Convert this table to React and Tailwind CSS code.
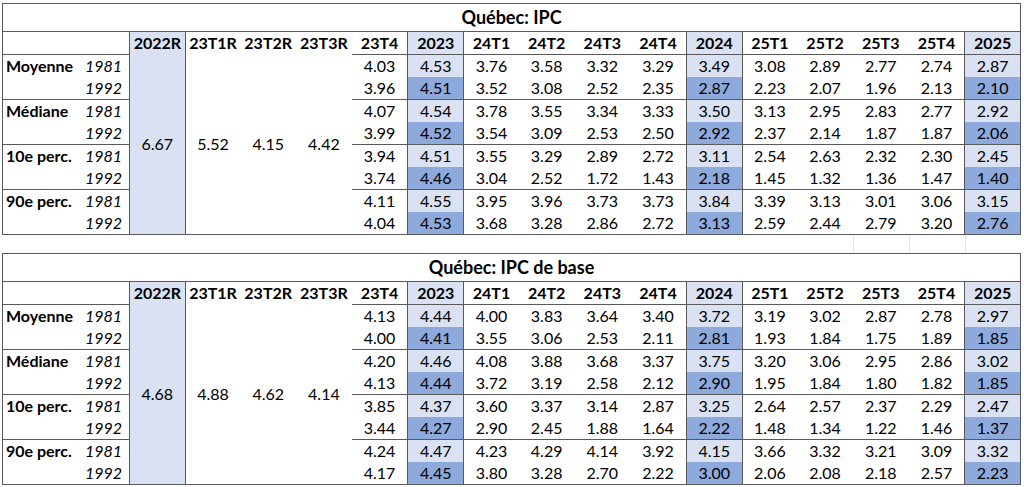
import React from "react";

const HEAD = ["2022R","23T1R","23T2R","23T3R","23T4","2023","24T1","24T2","24T3","24T4","2024","25T1","25T2","25T3","25T4","2025"];

const T1 = {
  title: "Québec: IPC",
  merged: ["6.67","5.52","4.15","4.42"],
  rows: [
    ["Moyenne","1981",["4.03","4.53","3.76","3.58","3.32","3.29","3.49","3.08","2.89","2.77","2.74","2.87"]],
    [null,"1992",["3.96","4.51","3.52","3.08","2.52","2.35","2.87","2.23","2.07","1.96","2.13","2.10"]],
    ["Médiane","1981",["4.07","4.54","3.78","3.55","3.34","3.33","3.50","3.13","2.95","2.83","2.77","2.92"]],
    [null,"1992",["3.99","4.52","3.54","3.09","2.53","2.50","2.92","2.37","2.14","1.87","1.87","2.06"]],
    ["10e perc.","1981",["3.94","4.51","3.55","3.29","2.89","2.72","3.11","2.54","2.63","2.32","2.30","2.45"]],
    [null,"1992",["3.74","4.46","3.04","2.52","1.72","1.43","2.18","1.45","1.32","1.36","1.47","1.40"]],
    ["90e perc.","1981",["4.11","4.55","3.95","3.96","3.73","3.73","3.84","3.39","3.13","3.01","3.06","3.15"]],
    [null,"1992",["4.04","4.53","3.68","3.28","2.86","2.72","3.13","2.59","2.44","2.79","3.20","2.76"]],
  ],
};

const T2 = {
  title: "Québec: IPC de base",
  merged: ["4.68","4.88","4.62","4.14"],
  rows: [
    ["Moyenne","1981",["4.13","4.44","4.00","3.83","3.64","3.40","3.72","3.19","3.02","2.87","2.78","2.97"]],
    [null,"1992",["4.00","4.41","3.55","3.06","2.53","2.11","2.81","1.93","1.84","1.75","1.89","1.85"]],
    ["Médiane","1981",["4.20","4.46","4.08","3.88","3.68","3.37","3.75","3.20","3.06","2.95","2.86","3.02"]],
    [null,"1992",["4.13","4.44","3.72","3.19","2.58","2.12","2.90","1.95","1.84","1.80","1.82","1.85"]],
    ["10e perc.","1981",["3.85","4.37","3.60","3.37","3.14","2.87","3.25","2.64","2.57","2.37","2.29","2.47"]],
    [null,"1992",["3.44","4.27","2.90","2.45","1.88","1.64","2.22","1.48","1.34","1.22","1.46","1.37"]],
    ["90e perc.","1981",["4.24","4.47","4.23","4.29","4.14","3.92","4.15","3.66","3.32","3.21","3.09","3.32"]],
    [null,"1992",["4.17","4.45","3.80","3.28","2.70","2.22","3.00","2.06","2.08","2.18","2.57","2.23"]],
  ],
};

const ANNUAL = [1, 6, 11];
const LEFTB = [1, 2, 6, 7, 11];

function headClass(i) {
  const blue = i === 0 || i === 5 || i === 10 || i === 15;
  const leftB = i === 0 || i === 1 || i === 5 || i === 6 || i === 10 || i === 11 || i === 15;
  return [
    "flex items-center justify-center font-bold",
    blue ? "bg-[#d9e1f2]" : "",
    leftB ? "border-l border-[#595959]" : "",
  ].join(" ");
}

function valClass(i, rowIdx) {
  const annual = ANNUAL.includes(i);
  const is1992 = rowIdx % 2 === 1;
  const groupTop = rowIdx % 2 === 0;
  return [
    "flex items-center justify-center",
    annual ? (is1992 ? "bg-[#8ea9db]" : "bg-[#d9e1f2]") : "",
    LEFTB.includes(i) ? "border-l border-l-[#595959]" : "",
    groupTop ? "border-t border-t-[#595959]" : "",
  ].join(" ");
}

function Table({ t }) {
  return (
    <div className="w-[1019px] border border-[#595959] bg-white">
      <div className="h-[28px] border-b border-[#595959] flex items-center justify-center font-bold text-[18px]">
        {t.title}
      </div>
      <div className="grid grid-cols-[126px_repeat(16,1fr)] grid-rows-[22px_repeat(8,22.5px)] text-[16px] leading-none">
        <div />
        {HEAD.map((h, i) => (
          <div key={h} className={headClass(i)}>{h}</div>
        ))}
        {t.rows.map((r, ri) => (
          <React.Fragment key={ri}>
            <div
              className={
                ri % 2 === 0
                  ? "flex items-center justify-between pl-[3px] pr-[7px] border-t border-[#595959]"
                  : "flex items-center justify-between pl-[3px] pr-[7px]"
              }
            >
              <span className="font-bold">{r[0]}</span>
              <span className="italic">{r[1]}</span>
            </div>
            {ri === 0 &&
              t.merged.map((m, mi) => (
                <div
                  key={"m" + mi}
                  className={
                    mi === 0
                      ? "row-span-8 flex items-center justify-center bg-[#d9e1f2] border-l border-[#595959]"
                      : mi === 1
                      ? "row-span-8 flex items-center justify-center border-l border-[#595959]"
                      : "row-span-8 flex items-center justify-center"
                  }
                >
                  {m}
                </div>
              ))}
            {r[2].map((v, i) => (
              <div key={i} className={valClass(i, ri)}>{v}</div>
            ))}
          </React.Fragment>
        ))}
      </div>
    </div>
  );
}

export default function App() {
  return (
    <div
      className="w-[1024px] h-[487px] bg-white text-black overflow-hidden pt-[3px] pl-[2px]"
      style={{ fontFamily: "Lato, 'Open Sans', sans-serif" }}
    >
      <Table t={T1} />
      <div className="flex h-[18px] pl-[851px]">
        <div className="w-[56px] border-l border-[#e3e3e3]" />
        <div className="w-[56px] border-l border-[#e3e3e3]" />
        <div className="w-[56px] border-l border-[#e3e3e3]" />
      </div>
      <Table t={T2} />
    </div>
  );
}
